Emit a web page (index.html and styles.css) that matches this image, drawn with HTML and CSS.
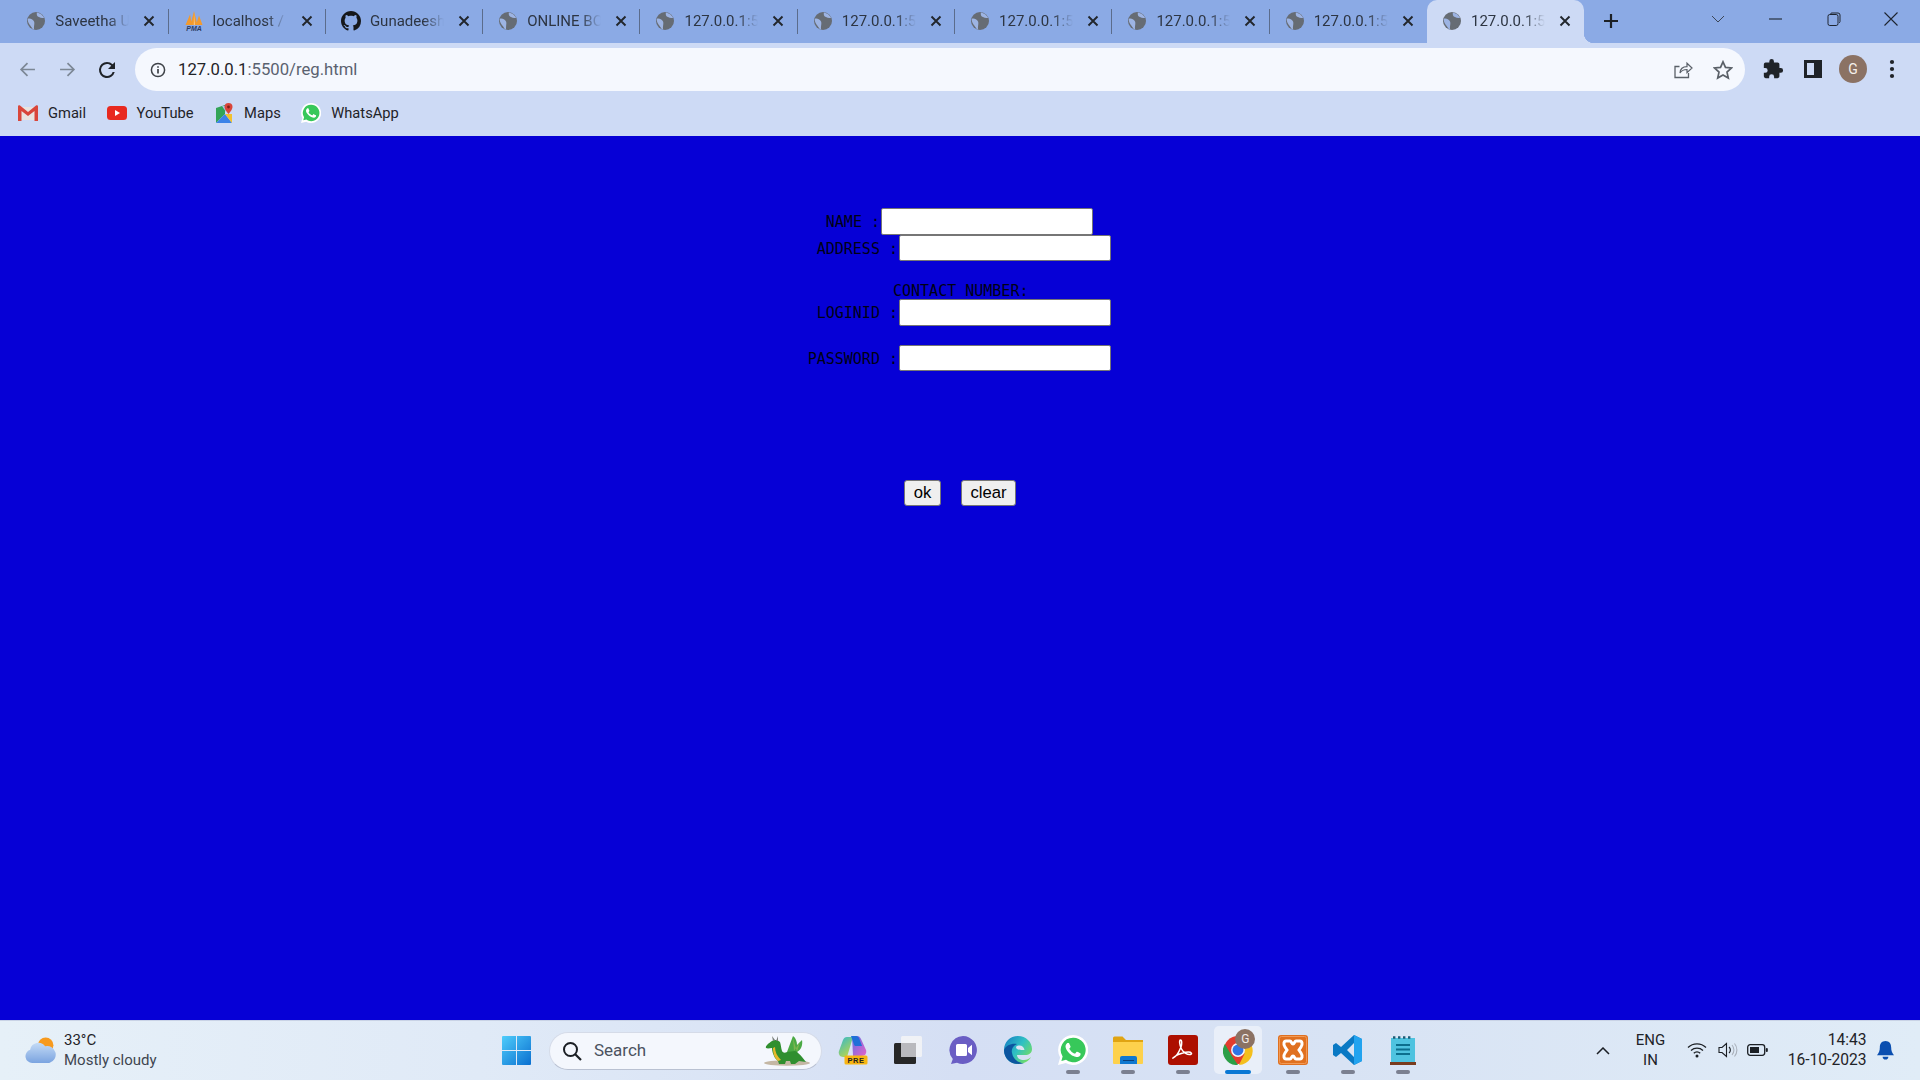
FILE: index.html
```html
<!DOCTYPE html>
<html lang="en">
<head>
<meta charset="utf-8">
<title>127.0.0.1:5500/reg.html</title>
<link rel="stylesheet" href="styles.css">
</head>
<body>
<svg class="defs" width="0" height="0" aria-hidden="true">
  <symbol id="globe" viewBox="0 0 20 20"><circle cx="10" cy="10" r="10" fill="#666c74"/><path fill="#9db4e3" d="M.8 7.500C3.500 6.500 6 8 7.500 10c1.500 2 0 5 .3 9.500L6.300 19C4.500 15 .6 13 .8 7.500zM11 .5c-.6 2.500.3 4.500 2.300 5 1.700 1.200 3.700 1.500 5.700 1C17.500 3.500 14.500 1 11 .5z"/></symbol>
  <symbol id="x" viewBox="0 0 12 12"><path d="M1.500 1.500l9 9M10.500 1.500l-9 9" stroke="#22262c" stroke-width="1.900" fill="none"/></symbol>
  <symbol id="wa-phone" viewBox="0 0 24 24"><path fill="#fff" d="M17.470 14.380c-.3-.15-1.760-.87-2.030-.97-.27-.1-.47-.15-.67.15-.2.3-.77.97-.94 1.170-.17.2-.35.22-.65.07-.3-.15-1.260-.46-2.390-1.480-.88-.79-1.480-1.760-1.650-2.060-.17-.3-.02-.46.13-.61.13-.13.3-.35.45-.52.15-.17.2-.3.3-.5.1-.2.05-.37-.02-.52-.07-.15-.67-1.610-.92-2.200-.24-.58-.49-.5-.67-.51h-.57c-.2 0-.52.07-.79.37-.27.3-1.040 1.020-1.040 2.480s1.070 2.870 1.210 3.070c.15.2 2.100 3.200 5.080 4.490.71.31 1.260.49 1.690.63.71.23 1.360.19 1.870.12.57-.09 1.760-.72 2.010-1.410.25-.7.25-1.290.17-1.410-.07-.13-.27-.2-.57-.35z"/></symbol>
</svg>

<header class="chrome">
  <div class="tabstrip">
    <div class="tab">
      <svg class="fav"><use href="#globe"/></svg><span class="tab-title">Saveetha University</span><svg class="tab-x"><use href="#x"/></svg>
    </div>
    <div class="tab">
      <svg class="fav fav-pma" viewBox="0 0 20 20"><path fill="#f29a2e" d="M1.500 14L6 3.500 8 14zM6.500 14L10 0l3.500 14zM12 14l3-9.500L18.500 14z"/><path fill="#f9d29a" d="M10 2l.8 12h-1z"/><text x="10" y="19.800" class="pma">PMA</text></svg><span class="tab-title">localhost / 127.0.0.1</span><svg class="tab-x"><use href="#x"/></svg>
    </div>
    <div class="tab">
      <svg class="fav fav-gh" viewBox="0 0 16 16"><path fill="#16181b" d="M8 0C3.580 0 0 3.580 0 8c0 3.540 2.290 6.530 5.470 7.590.4.07.55-.17.55-.38 0-.19-.01-.82-.01-1.490-2.010.37-2.530-.49-2.690-.94-.09-.23-.48-.94-.82-1.130-.28-.15-.68-.52-.01-.53.63-.01 1.080.58 1.230.82.72 1.210 1.870.87 2.330.66.07-.52.28-.87.51-1.070-1.780-.2-3.640-.89-3.640-3.950 0-.87.31-1.590.82-2.150-.08-.2-.36-1.020.08-2.120 0 0 .67-.21 2.200.82.64-.18 1.320-.27 2-.27.68 0 1.360.09 2 .27 1.530-1.040 2.200-.82 2.200-.82.44 1.100.16 1.920.08 2.120.51.56.82 1.270.82 2.150 0 3.070-1.870 3.750-3.650 3.950.29.25.54.73.54 1.480 0 1.070-.01 1.930-.01 2.200 0 .21.15.46.55.38A8.013 8.013 0 0016 8c0-4.420-3.580-8-8-8z"/></svg><span class="tab-title">Gunadeesh/online</span><svg class="tab-x"><use href="#x"/></svg>
    </div>
    <div class="tab"><svg class="fav"><use href="#globe"/></svg><span class="tab-title">ONLINE BOOK STORE</span><svg class="tab-x"><use href="#x"/></svg></div>
    <div class="tab"><svg class="fav"><use href="#globe"/></svg><span class="tab-title">127.0.0.1:5500/index</span><svg class="tab-x"><use href="#x"/></svg></div>
    <div class="tab"><svg class="fav"><use href="#globe"/></svg><span class="tab-title">127.0.0.1:5500/index</span><svg class="tab-x"><use href="#x"/></svg></div>
    <div class="tab"><svg class="fav"><use href="#globe"/></svg><span class="tab-title">127.0.0.1:5500/index</span><svg class="tab-x"><use href="#x"/></svg></div>
    <div class="tab"><svg class="fav"><use href="#globe"/></svg><span class="tab-title">127.0.0.1:5500/index</span><svg class="tab-x"><use href="#x"/></svg></div>
    <div class="tab tab-prev"><svg class="fav"><use href="#globe"/></svg><span class="tab-title">127.0.0.1:5500/index</span><svg class="tab-x"><use href="#x"/></svg></div>
    <div class="tab tab-active"><svg class="fav"><use href="#globe"/></svg><span class="tab-title">127.0.0.1:5500/reg.html</span><svg class="tab-x"><use href="#x"/></svg></div>
    <svg class="newtab" viewBox="0 0 16 16"><path d="M8 1v14M1 8h14" stroke="#1c2026" stroke-width="2.200" fill="none"/></svg>
    <div class="winbtns">
      <svg class="win-chev" viewBox="0 0 14 8"><path d="M1 1l6 6 6-6" stroke="#3c4656" stroke-width="1" fill="none"/></svg>
      <span class="winbtn"><svg class="win-ico" viewBox="0 0 14 14"><path d="M0 7h13" stroke="#1e2530" stroke-width="1.100"/></svg></span>
      <span class="winbtn"><svg class="win-ico" viewBox="0 0 14 14"><path d="M3.500 2.300V2a1.400 1.400 0 0 1 1.400-1H11a2 2 0 0 1 2 2v6.500a1.400 1.400 0 0 1-1 1.300" stroke="#1e2530" stroke-width="1" fill="none"/><rect x="1" y="2.500" width="10" height="11" rx="1.800" stroke="#1e2530" stroke-width="1" fill="none"/></svg></span>
      <span class="winbtn"><svg class="win-ico" viewBox="0 0 14 14"><path d="M.5.500l13 13M13.500.500l-13 13" stroke="#1e2530" stroke-width="1.100" fill="none"/></svg></span>
    </div>
  </div>

  <div class="toolbar">
    <svg class="nav nav-back" viewBox="0 0 16 16"><path d="M15 8H2M8 2L2 8l6 6" stroke="#7c8795" stroke-width="1.600" fill="none"/></svg>
    <svg class="nav nav-fwd" viewBox="0 0 16 16"><path d="M1 8h13M8 2l6 6-6 6" stroke="#7c8795" stroke-width="1.600" fill="none"/></svg>
    <svg class="nav nav-reload" viewBox="0 0 24 24"><path fill="#1f2328" d="M17.650 6.350A7.960 7.960 0 0 0 12 4a8 8 0 1 0 7.730 10h-2.080A6 6 0 1 1 12 6c1.660 0 3.140.690 4.220 1.780L13 11h7V4z"/></svg>
    <div class="omnibox">
      <svg class="info" viewBox="0 0 16 16"><circle cx="8" cy="8" r="6.600" stroke="#3e4248" stroke-width="1.500" fill="none"/><path d="M8 7v4.500M8 4.300v1.500" stroke="#3e4248" stroke-width="1.700"/></svg>
      <span class="url"><span class="url-host">127.0.0.1</span>:5500/reg.html</span>
      <svg class="omni-ico omni-share" viewBox="0 0 20 20"><path d="M6.500 7.500H2v11h13.500v-4.500" stroke="#5a6068" stroke-width="1.300" fill="none"/><path d="M7 14c.3-4.200 3-6.300 7-6.300V4.200L19 9l-5 4.600V10.500c-3 0-5.500 1-7 3.500z" stroke="#5a6068" stroke-width="1.200" fill="none"/></svg>
      <svg class="omni-ico omni-star" viewBox="0 0 20 20"><path d="M10 1.800l2.500 5.600 6 .6-4.500 4.100 1.300 6L10 15l-5.300 3.100 1.300-6L1.500 8l6-.6z" stroke="#5a6068" stroke-width="1.700" fill="none"/></svg>
    </div>
    <svg class="tool tool-ext" viewBox="0 0 24 24"><path fill="#1f2328" d="M20.500 11H19V7a2 2 0 0 0-2-2h-4V3.500a2.500 2.500 0 0 0-5 0V5H4a2 2 0 0 0-2 2v3.800h1.500a2.700 2.700 0 0 1 0 5.400H2V20a2 2 0 0 0 2 2h3.800v-1.500a2.700 2.700 0 0 1 5.400 0V22H17a2 2 0 0 0 2-2v-4h1.500a2.500 2.500 0 0 0 0-5z"/></svg>
    <svg class="tool tool-side" viewBox="0 0 18 18"><path fill-rule="evenodd" fill="#1f2328" d="M0 0h18v18H0zM3 3v12h7V3z"/></svg>
    <span class="avatar">G</span>
    <svg class="tool tool-menu" viewBox="0 0 6 20"><circle cx="3" cy="3" r="2.100" fill="#1f2328"/><circle cx="3" cy="10" r="2.100" fill="#1f2328"/><circle cx="3" cy="17" r="2.100" fill="#1f2328"/></svg>
  </div>

  <div class="bookmarks">
    <span class="bm bm-gmail"><svg class="bm-ico" viewBox="0 0 20 16"><path fill="#e8e4e0" d="M1 2h18v13H1z"/><path fill="#d9463a" d="M0 1.500C0 .5 1.200 0 2 .6L10 7 18 .6c.8-.6 2-.1 2 .9V16h-3.500V6L10 11 3.500 6v10H0z"/></svg>Gmail</span>
    <span class="bm bm-yt"><svg class="bm-ico" viewBox="0 0 20 14"><rect width="20" height="14" rx="3.500" fill="#e8291f"/><path fill="#fff" d="M8 4l5 3-5 3z"/></svg>YouTube</span>
    <span class="bm bm-maps"><svg class="bm-ico bm-ico-maps" viewBox="0 0 18 20"><path fill="#33a457" d="M1 5l9-3v9L1 20z"/><path fill="#3b82e8" d="M1 20l9-9 7 9z"/><path fill="#f2c12e" d="M10 11l7 0v9z"/><path fill="#a9c4ef" d="M7 3l4 0 0 6z"/><path fill="#d9463a" d="M13.500 0a4 4 0 0 1 4 4c0 2.800-4 7-4 7s-4-4.200-4-7a4 4 0 0 1 4-4z"/><circle cx="13.500" cy="4" r="1.400" fill="#7f2018"/></svg>Maps</span>
    <span class="bm bm-wa"><svg class="bm-ico bm-ico-wa" viewBox="0 0 24 24"><path fill="#fff" d="M12 0a12 12 0 0 0-10.300 18L0 24l6.200-1.600A12 12 0 1 0 12 0z"/><path fill="#37c85a" d="M12 2.200a9.800 9.800 0 0 0-8.300 15l-1 3.600 3.700-1A9.800 9.800 0 1 0 12 2.200z"/><use href="#wa-phone"/></svg>WhatsApp</span>
  </div>
</header>

<main class="page">
  <form class="reg">
    <div class="row row-name"><label class="lbl" for="f-name">NAME :</label><input class="field" id="f-name" type="text"></div>
    <div class="row row-address"><label class="lbl" for="f-address">ADDRESS :</label><input class="field" id="f-address" type="text"></div>
    <div class="contact">CONTACT NUMBER:</div>
    <div class="row row-login"><label class="lbl" for="f-login">LOGINID :</label><input class="field" id="f-login" type="text"></div>
    <div class="row row-pass"><label class="lbl" for="f-pass">PASSWORD :</label><input class="field" id="f-pass" type="password"></div>
    <div class="actions"><button class="btn btn-ok" type="button">ok</button><button class="btn btn-clear" type="button">clear</button></div>
  </form>
</main>

<footer class="taskbar">
  <div class="weather">
    <svg class="weather-ico" viewBox="0 0 30 26"><circle cx="20" cy="8" r="7.500" fill="#f79a1e"/><path fill="url(#cloud)" d="M7 25a6.500 6.500 0 0 1-2-12.700A8 8 0 0 1 19.500 9a7 7 0 0 1 4 16z"/><defs><linearGradient id="cloud" x1="0" y1="0" x2="0" y2="1"><stop offset="0" stop-color="#c4dbf6"/><stop offset="1" stop-color="#7ba4e0"/></linearGradient></defs></svg>
    <div class="weather-text"><span class="w-temp">33°C</span><span class="w-desc">Mostly cloudy</span></div>
  </div>
  <svg class="start" viewBox="0 0 29 29"><defs><linearGradient id="win" x1="0" y1="0" x2="1" y2="1"><stop offset="0" stop-color="#4fcdfb"/><stop offset="1" stop-color="#0a6fd0"/></linearGradient></defs><path fill="url(#win)" d="M1 0h13v14H0V1a1 1 0 0 1 1-1zM15 0h13a1 1 0 0 1 1 1v13H15zM0 15h14v14H1a1 1 0 0 1-1-1zM15 15h14v13a1 1 0 0 1-1 1H15z"/></svg>
  <div class="search">
    <svg class="search-ico" viewBox="0 0 20 20"><circle cx="8.500" cy="8.500" r="6.500" stroke="#1b1f24" stroke-width="2" fill="none"/><path d="M13 13l6 6" stroke="#1b1f24" stroke-width="2.200"/></svg>
    <span class="search-text">Search</span>
    <svg class="dragon" viewBox="0 0 48 31"><ellipse cx="24" cy="28" rx="23" ry="2.800" fill="#c4b7a4"/><path fill="#4aa944" d="M24 17L30 1c3 2 4 6 4 9l5-5c1 5-1 10-5 12z"/><path fill="#7db64f" d="M30 3l1 13 6-9-3 10z"/><path fill="#2f8f2f" d="M9 6c3-2 6-1 8 1 1 3 1 6 2 9 1 2 3 2 5 1l8-1c3 1 5 4 7 6l4 5-7-1-4 3h-4l-1-3-4 0-1 3h-6l-1-3-3-3c-2-4-3-7-3-10-2 0-4 1-6 0-1-2 3-5 6-7z"/><path fill="#e6b92a" d="M12 12c0 5 2 9 6 13l-3 1c-4-4-5-8-5-13z"/><path fill="#7a7f7a" d="M10 6L9 1l3 4zM13 6l2-5v5z"/></svg>
  </div>
  <div class="apps">
    <div class="app">
      <svg class="app-ico" viewBox="0 0 30 30"><defs><linearGradient id="cpl" x1="0" y1="0" x2=".6" y2="1"><stop offset="0" stop-color="#2fb7cf"/><stop offset="1" stop-color="#b6d64f"/></linearGradient><linearGradient id="cpr" x1="0" y1="0" x2="1" y2="1"><stop offset="0" stop-color="#5f6ee8"/><stop offset="1" stop-color="#e463c8"/></linearGradient></defs><path fill="url(#cpr)" d="M14 1h5c2 0 3 1 4 3l5 11c1 3-1 6-4 6h-9z"/><path fill="url(#cpl)" d="M9 2h6L9 22H5c-3 0-5-3-4-6L5 5c.8-2 2-3 4-3z"/><path fill="#1f6fd8" d="M13 1h5c1.500 0 2.500 1 3 2l3 8h-6c-1 0-1.500-.5-2-1.500z"/><rect x="6.500" y="20.500" width="23" height="9" rx="1.500" fill="#f7b512"/><text x="18" y="27.700" class="pre">PRE</text></svg>
    </div>
    <div class="app">
      <svg class="app-ico" viewBox="0 0 30 30"><rect x="1" y="8" width="22" height="21" rx="1.500" fill="#272727"/><rect x="8" y="1" width="21" height="21" rx="1.500" fill="#f4f4f6" fill-opacity=".88"/><rect x="8" y="8" width="15" height="14" fill="#b9b9bd"/></svg>
    </div>
    <div class="app">
      <svg class="app-ico" viewBox="0 0 30 30"><path fill="#6a5ec4" d="M15 1a14 14 0 1 1-6 26.700L3 29l1.800-5A14 14 0 0 1 15 1z"/><path fill="#fff" d="M8 10.500a1.500 1.500 0 0 1 1.500-1.500h8a1.500 1.500 0 0 1 1.500 1.500v9a1.500 1.500 0 0 1-1.500 1.500h-8A1.500 1.500 0 0 1 8 19.500zM20 13l4-3.200v10.400L20 17z"/></svg>
    </div>
    <div class="app">
      <svg class="app-ico" viewBox="0 0 30 30"><defs><linearGradient id="edge" x1="0" y1="0" x2="1" y2=".7"><stop offset="0" stop-color="#1479c4"/><stop offset=".55" stop-color="#2fc0c4"/><stop offset="1" stop-color="#74dd62"/></linearGradient></defs><path fill="url(#edge)" d="M15 1c8 0 14 6 14 13 0 4-3 6-7 6h-8c0 3 3 5 7 5 3 0 5-1 7-3-2 4-7 7-13 7C7 29 1 23 1 15S7 1 15 1z"/><path fill="#0c55a0" d="M1 15c2-5 8-7 13-6-4 2-6 5-5 9 1 6 6 10 12 10-2 .7-4 1-6 1C7 29 1 23 1 15z"/><path fill="#dce3f4" d="M21.500 15c-.3-3-3-5-6-4.500-2 .3-3 1.700-2 3 1 1 3 1.500 8 1.500z"/></svg>
    </div>
    <div class="app app-running">
      <svg class="app-ico" viewBox="0 0 24 24"><path fill="#fff" d="M12 0a12 12 0 0 0-10.300 18L0 24l6.200-1.600A12 12 0 1 0 12 0z"/><path fill="#37c85a" d="M12 2.200a9.800 9.800 0 0 0-8.300 15l-1 3.600 3.700-1A9.800 9.800 0 1 0 12 2.200z"/><use href="#wa-phone"/></svg>
    </div>
    <div class="app app-running">
      <svg class="app-ico" viewBox="0 0 30 30"><path fill="#e0a412" d="M0 3a1.500 1.500 0 0 1 1.500-1.500h8L13 5h17v23H0z"/><path fill="#fdd14c" d="M0 7h30v21a1 1 0 0 1-1 1H1a1 1 0 0 1-1-1z"/><path fill="#0f78d0" d="M7 23a2 2 0 0 1 2-2h13a2 2 0 0 1 2 2v6H7z"/><path fill="#0a3f7a" d="M10 25h11v1H10z"/></svg>
    </div>
    <div class="app app-running">
      <svg class="app-ico" viewBox="0 0 30 30"><rect width="30" height="30" rx="3" fill="#ad0f00"/><path fill="none" stroke="#fff" stroke-width="1.500" d="M5 23c3-1 6-6 8-11 1-3 1-7-.5-7-1.500 0-1 5 1 9 2 4 6 6 9 5.500 2-.5 1-2.500-2-2.500-3 0-10 2-13 4-2 1.500-3 2.500-2.500 2z"/></svg>
    </div>
    <div class="app app-active">
      <svg class="app-ico" viewBox="0 0 32 32"><circle cx="16" cy="16" r="15" fill="#e23c2e"/><path fill="#2c9f47" d="M2 9.500l7.500 13 6.500 9.500A15 15 0 0 1 2 9.500z"/><path fill="#f4bf1e" d="M16 10h14a15 15 0 0 1-13 21.900L23 20z"/><circle cx="16" cy="16" r="7.400" fill="#f4f5fb"/><circle cx="16" cy="16" r="5.800" fill="#2f75e6"/></svg>
      <span class="app-badge">G</span>
    </div>
    <div class="app app-running">
      <svg class="app-ico" viewBox="0 0 30 30"><rect width="30" height="30" rx="3" fill="#e0701f"/><rect x="1.500" y="1.500" width="27" height="27" rx="2" fill="none" stroke="#f29a55" stroke-width="1"/><path fill="none" stroke="#fff" stroke-width="3" d="M8 6h4c1.500 0 1.500 3 3 3s1.500-3 3-3h4c2 0 3 3 1 6l-2 3 2 3c2 3 1 6-1 6h-4c-1.500 0-1.500-3-3-3s-1.500 3-3 3H8c-2 0-3-3-1-6l2-3-2-3c-2-3-1-6 1-6z"/></svg>
    </div>
    <div class="app app-running">
      <svg class="app-ico" viewBox="0 0 30 30"><path fill="#0a79c4" d="M21 0l8 4v22l-8 4-13-12-5 4-3-2V10l3-2 5 4zM21 8l-7 7 7 7z"/><path fill="#22a3ef" d="M21 0l8 4v22l-8 4z"/></svg>
    </div>
    <div class="app app-running">
      <svg class="app-ico" viewBox="0 0 26 30"><path fill="#4fc3e0" d="M1 3h24v24H1z"/><rect x="0" y="27" width="26" height="3" fill="#7a3c1e"/><path stroke="#0c6f8e" stroke-width="1.800" d="M6 10h14M6 14.500h14M6 19h14"/><path stroke="#1c5d76" stroke-width="2.400" stroke-dasharray="2.400 2.600" d="M3 2.500h20"/></svg>
    </div>
  </div>
  <div class="tray">
    <svg class="tray-chev" viewBox="0 0 14 8"><path d="M1 7l6-6 6 6" stroke="#1b1f24" stroke-width="1.500" fill="none"/></svg>
    <div class="lang"><span>ENG</span><span>IN</span></div>
    <svg class="tray-ico tray-wifi" viewBox="0 0 20 16"><path d="M1 5.500a13 13 0 0 1 18 0M4 8.500a9 9 0 0 1 12 0M6.800 11.200a4.500 4.500 0 0 1 6.400 0" stroke="#1b1f24" stroke-width="1.300" fill="none"/><circle cx="10" cy="14" r="1.500" fill="#1b1f24"/></svg>
    <svg class="tray-ico tray-vol" viewBox="0 0 20 16"><path d="M1 5.500h3L8.500 1.500v13L4 10.500H1z" stroke="#1b1f24" stroke-width="1.100" fill="none"/><path d="M11 5a4 4 0 0 1 0 6" stroke="#1b1f24" stroke-width="1.100" fill="none"/><path d="M14 3a7.500 7.500 0 0 1 0 10M16.500 1.500a10 10 0 0 1 0 13" stroke="#aab1bb" stroke-width="1.100" fill="none"/></svg>
    <svg class="tray-ico tray-bat" viewBox="0 0 21 12"><rect x=".7" y=".7" width="17" height="10.600" rx="2.500" stroke="#1b1f24" stroke-width="1.300" fill="none"/><rect x="3" y="3" width="9" height="6" fill="#1b1f24"/><rect x="18.800" y="4" width="2" height="4" rx="1" fill="#1b1f24"/></svg>
    <div class="clock"><span>14:43</span><span>16-10-2023</span></div>
    <svg class="bell" viewBox="0 0 18 20"><path fill="#0b4fb0" d="M9 0c4 0 6 3 6 6.500 0 4 1 6 3 8.500H0c2-2.500 3-4.500 3-8.500C3 3 5 0 9 0z"/><path fill="#0b4fb0" d="M6 16.500h6a3 3 0 0 1-6 0z"/></svg>
  </div>
</footer>
</body>
</html>
```

FILE: styles.css
```css
* { box-sizing: border-box; }
html, body { margin: 0; height: 100%; }
body {
  width: 1920px;
  height: 1080px;
  overflow: hidden;
  display: flex;
  flex-direction: column;
  font-family: "Roboto", "Open Sans", sans-serif;
  color: #1f2328;
  background: #0600d6;
}
.defs { position: absolute; }

/* browser chrome */
.chrome { flex: none; background: #cddaf5; }
.tabstrip {
  height: 43px;
  background: #8baae5;
  display: flex;
  align-items: center;
  padding-left: 11.3px;
}
.tab {
  position: relative;
  flex: none;
  width: 157.3px;
  height: 43px;
  display: flex;
  align-items: center;
  padding-left: 16px;
  padding-bottom: 2px;
}
.tab::after {
  content: "";
  position: absolute;
  right: 0;
  top: 9px;
  height: 25px;
  width: 1px;
  background: #5b6c8c;
}
.tab-prev::after, .tab-active::after { display: none; }
.tab-active {
  background: #cddaf5;
  border-radius: 10px 10px 0 0;
}
.tab-active::before {
  content: "";
  position: absolute;
  right: -10px;
  bottom: 0;
  width: 10px;
  height: 10px;
  background: radial-gradient(circle at 100% 0, transparent 10px, #cddaf5 10.5px);
}
.fav { flex: none; width: 18px; height: 18px; }
.fav-pma { width: 20px; height: 20px; margin-left: -1px; margin-right: -1px; }
.fav-gh { width: 20px; height: 20px; margin-left: -1px; margin-right: -1px; }
.pma { font: italic bold 7px "Liberation Sans", sans-serif; fill: #2a3b66; text-anchor: middle; }
.pre { font: bold 7.5px "Liberation Sans", sans-serif; fill: #222; text-anchor: middle; letter-spacing: .5px; }
.tab-title {
  flex: none;
  width: 74px;
  margin-left: 10px;
  font-size: 15px;
  line-height: 20px;
  white-space: nowrap;
  overflow: hidden;
  color: #2d3542;
  -webkit-mask-image: linear-gradient(90deg, #000 72%, transparent 100%);
  mask-image: linear-gradient(90deg, #000 72%, transparent 100%);
}
.tab-x { flex: none; width: 12px; height: 12px; margin-left: 14px; }
.newtab { flex: none; width: 16px; height: 16px; margin-left: 19px; margin-bottom: 2px; }
.winbtns { margin-left: auto; display: flex; align-items: center; height: 38px; align-self: flex-start; }
.win-chev { width: 14px; height: 8px; margin-right: 22px; }
.winbtn { width: 57.6px; display: flex; justify-content: center; }
.win-ico { width: 14px; height: 14px; }

.toolbar {
  height: 48px;
  display: flex;
  align-items: center;
  padding-top: 5px;
}
.nav { flex: none; width: 17px; height: 17px; }
.nav-back { margin-left: 19px; }
.nav-fwd { margin-left: 23px; }
.nav-reload { width: 24px; height: 24px; margin-left: 19px; }
.omnibox {
  flex: none;
  width: 1610px;
  height: 43px;
  margin-left: 16px;
  border-radius: 22px;
  background: #f5f8fe;
  display: flex;
  align-items: center;
  padding-left: 15px;
}
.info { flex: none; width: 16px; height: 16px; }
.url { margin-left: 12px; font-size: 16.7px; color: #5a6270; }
.url-host { color: #1f2328; }
.omni-ico { flex: none; width: 20px; height: 20px; }
.omni-share { margin-left: auto; margin-bottom: 1px; }
.omni-star { margin-left: 20px; margin-right: 12px; }
.tool { flex: none; }
.tool-ext { width: 22px; height: 22px; margin-left: 17px; margin-bottom: 1px; }
.tool-side { width: 18px; height: 18px; margin-left: 20px; margin-bottom: 1px; }
.avatar {
  flex: none;
  width: 28px;
  height: 28px;
  margin-left: 17px;
  margin-bottom: 1px;
  border-radius: 50%;
  background: #8b7264;
  color: #f5f0ec;
  font-size: 14px;
  display: flex;
  align-items: center;
  justify-content: center;
}
.tool-menu { width: 6px; height: 20px; margin-left: 22px; margin-bottom: 1px; }

.bookmarks {
  height: 45px;
  display: flex;
  align-items: center;
  padding-left: 18px;
  padding-bottom: 2px;
  font-size: 14.7px;
}
.bm { display: flex; align-items: center; color: #1f2328; }
.bm-ico { flex: none; width: 20px; height: 16px; margin-right: 10px; }
.bm-ico-maps { height: 20px; width: 18px; margin-right: 11px; }
.bm-ico-wa { height: 20px; width: 20px; margin-right: 10px; }
.bm-yt { margin-left: 20.5px; }
.bm-maps { margin-left: 21.5px; }
.bm-wa { margin-left: 20.5px; }

/* page */
.page { flex: 1; min-height: 0; background: #0600d6; padding-top: 72px; }
.reg { width: 1110.5px; display: flex; flex-direction: column; }
.row { display: flex; justify-content: flex-end; align-items: center; height: 26px; }
.row-name { height: 27px; padding-right: 18px; }
.row-login { height: 27px; }
.row-pass { margin-top: 19px; }
.lbl, .contact {
  font-family: "DejaVu Sans Mono", monospace;
  font-size: 15px;
  color: #000014;
  white-space: pre;
}
.lbl { margin-right: 1px; padding-top: 1px; }
.contact { margin-top: 21px; height: 17px; line-height: 18px; padding-left: 893px; }
.field {
  flex: none;
  width: 211.5px;
  height: 100%;
  margin: 0;
  padding: 1px 2px;
  background: #fff;
  border: 1.5px solid #767676;
  border-radius: 2px;
}
.actions { display: flex; margin-top: 109px; padding-left: 904px; gap: 20px; }
.btn {
  height: 26px;
  margin: 0;
  padding: 0;
  font-family: "Liberation Sans", sans-serif;
  font-size: 16.67px;
  color: #000;
  background: #efefef;
  border: 1.25px solid #767676;
  border-radius: 3px;
}
.btn-ok { width: 37px; }
.btn-clear { width: 55px; }

/* taskbar */
.taskbar {
  flex: none;
  height: 60px;
  display: flex;
  align-items: center;
  border-top: 1px solid #c9d3e6;
  background: linear-gradient(90deg, #e6f0f8 0%, #e0eaf7 25%, #d5dff4 50%, #d8e3f4 70%, #e0ecf7 100%);
}
.weather { flex: none; width: 502px; display: flex; align-items: center; padding-left: 25px; }
.weather-ico { flex: none; width: 31px; height: 27px; }
.weather-text { display: flex; flex-direction: column; margin-left: 8px; margin-bottom: 2px; font-size: 15px; line-height: 20px; }
.w-temp { color: #1f2328; }
.w-desc { color: #3f4650; }
.start { flex: none; width: 29px; height: 29px; margin-bottom: 1px; }
.search {
  flex: none;
  width: 273px;
  height: 38px;
  margin-left: 18px;
  border-radius: 19px;
  background: #f4f7fd;
  border: 1px solid #d5dbe8;
  border-bottom-color: #b9c1d2;
  display: flex;
  align-items: center;
  padding-left: 12px;
}
.search-ico { flex: none; width: 20px; height: 20px; }
.search-text { margin-left: 12px; font-size: 17px; color: #4b5260; margin-bottom: 1px; }
.dragon { flex: none; width: 48px; height: 31px; margin-left: auto; margin-right: 10px; }
.apps { flex: none; display: flex; margin-left: 3.4px; }
.app {
  position: relative;
  flex: none;
  width: 55px;
  height: 59px;
  display: flex;
  align-items: center;
  justify-content: center;
}
.app-ico { width: 30px; height: 30px; margin-bottom: 2px; }
.app-running::after, .app-active::after {
  content: "";
  position: absolute;
  left: 50%;
  bottom: 6px;
  width: 14px;
  height: 4px;
  margin-left: -7px;
  border-radius: 2px;
  background: #7b8090;
}
.app-active::before {
  content: "";
  position: absolute;
  left: 3.5px;
  top: 5px;
  width: 48px;
  height: 48px;
  border-radius: 5px;
  background: #e9eff9;
}
.app-active .app-ico { position: relative; }
.app-active::after { width: 26px; margin-left: -13px; background: #0a78d4; }
.app-badge {
  position: absolute;
  left: 25px;
  top: 8px;
  width: 20px;
  height: 20px;
  border-radius: 50%;
  background: #8b7264;
  color: #f0ebe8;
  font-size: 12px;
  display: flex;
  align-items: center;
  justify-content: center;
}
.tray { margin-left: auto; display: flex; align-items: center; padding-right: 26.5px; }
.tray-chev { flex: none; width: 14px; height: 8px; }
.lang { display: flex; flex-direction: column; align-items: center; width: 40px; margin-left: 21px; margin-bottom: 2px; font-size: 15px; line-height: 20px; }
.tray-ico { flex: none; margin-bottom: 1px; }
.tray-wifi { width: 20px; height: 16px; margin-left: 16px; }
.tray-vol { width: 20px; height: 16px; margin-left: 11px; }
.tray-bat { width: 21px; height: 12px; margin-left: 9px; }
.clock { display: flex; flex-direction: column; align-items: flex-end; width: 90px; margin-left: 9px; margin-bottom: 2px; font-size: 15.6px; line-height: 20px; }
.bell { flex: none; width: 17px; height: 19px; margin-left: 10px; }
```
